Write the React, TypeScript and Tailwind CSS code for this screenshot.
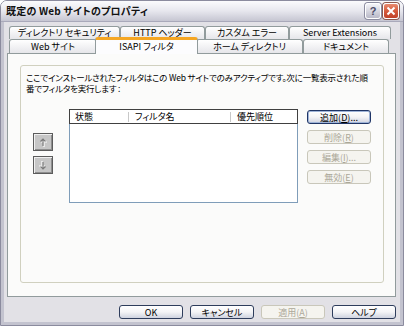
import React from "react";

const jp = "font-['Noto_Sans_CJK_JP','Noto_Sans',sans-serif] [font-feature-settings:'palt']";

const backTabs = [
    { label: "ディレクトリ セキュリティ", w: "w-[111px]" },
    { label: "HTTP ヘッダー", w: "w-[85px]" },
    { label: "カスタム エラー", w: "w-[84px]" },
    { label: "Server Extensions", w: "w-[102px]" },
];

function Tab({ label, w, selected }: { label: string; w: string; selected?: boolean }) {
    if (selected) {
        return (
            <div
                className={`${w} relative z-10 -mx-[2px] -mt-[2px] -mb-[1px] h-[17px] flex items-center justify-center rounded-t-[3px] border-x border-[#919b9c] border-t-[3px] border-t-[#f5a623] bg-[#fcfcfe] text-black`}
            >
                {label}
            </div>
        );
    }
    return (
        <div
            className={`${w} h-full flex items-center justify-center rounded-t-[3px] border-x border-t border-[#919b9c] bg-gradient-to-b from-white to-[#e6e6ea] text-black`}
        >
            {label}
        </div>
    );
}

function Btn({ children, disabled, primary }: { children: React.ReactNode; disabled?: boolean; primary?: boolean }) {
    return (
        <div
            className={
                "w-[64px] h-[14px] flex items-center justify-center rounded-[3px] border leading-none " +
                (disabled
                    ? "border-[#c9c7ba] bg-[#f5f4ef] text-[#aca899]"
                    : primary
                    ? "border-[#1f3566] bg-gradient-to-b from-white via-[#f4f4f6] to-[#cfd3e0] text-black shadow-[inset_0_0_0_1px_#9fb4d8]"
                    : "border-[#2e3d5c] bg-gradient-to-b from-white via-[#f4f4f6] to-[#cfd3e0] text-black")
            }
        >
            {children}
        </div>
    );
}

function ArrowBtn({ down }: { down?: boolean }) {
    return (
        <div className="w-[20px] h-[18px] flex items-center justify-center border border-[#5c5c5c] bg-[#c6c6c6] shadow-[inset_1px_1px_0_#f0f0f0,inset_-1px_-1px_0_#8e8e8e]">
            <svg width="8" height="11" viewBox="0 0 8 11">
                <g transform={down ? "rotate(180 4 5.5)" : undefined}>
                    <path d="M5 3 L5 10 M2.5 5.5 L5 3 L7.5 5.5" stroke="#ffffff" strokeWidth="1.2" fill="none" />
                    <path d="M4 2 L4 9 M1.5 4.5 L4 2 L6.5 4.5" stroke="#7c7c7c" strokeWidth="1.2" fill="none" />
                </g>
            </svg>
        </div>
    );
}

export default function App() {
    return (
        <div className={`w-[404px] h-[326px] bg-white text-[9px] leading-[10px] ${jp}`}>
            <div className="w-full h-full flex flex-col rounded-t-[7px] border border-[#8b8b9e] overflow-hidden">
                {/* Title bar */}
                <div className="h-[21px] shrink-0 flex items-center justify-between pl-[5px] pr-[4px] bg-gradient-to-b from-[#fbfbfd] via-[#e7e7ee] to-[#c6c6d2] border-b border-[#a9a9ba]">
                    <span className="text-[10px] font-bold text-[#111] tracking-[0.2px]">既定の Web サイトのプロパティ</span>
                    <div className="flex items-center gap-[2px]">
                        <div className="w-[16px] h-[16px] rounded-[3px] border border-white bg-gradient-to-b from-[#f4f4f8] to-[#b9b9c8] shadow-[0_0_0_1px_#8c8ca0] flex items-center justify-center text-[11px] font-bold text-[#4b4b68] font-['Liberation_Sans',sans-serif]">
                            ?
                        </div>
                        <div className="w-[16px] h-[16px] rounded-[3px] border border-white bg-gradient-to-b from-[#e88b70] via-[#d65b3c] to-[#c0422a] shadow-[0_0_0_1px_#8c5a50] flex items-center justify-center">
                            <svg width="10" height="10" viewBox="0 0 10 10">
                                <path d="M1.5 1.5 L8.5 8.5 M8.5 1.5 L1.5 8.5" stroke="#ffffff" strokeWidth="2" />
                            </svg>
                        </div>
                    </div>
                </div>

                {/* Body */}
                <div className="flex-1 flex flex-col bg-[#e2e1e6] border-x-[3px] border-b-[3px] border-[#c3c3cf] pl-[3px] pr-[4px] pt-[4px] pb-[3px]">
                    {/* Tabs */}
                    <div className="flex h-[13px] ml-[2px]">
                        {backTabs.map((t) => (
                            <Tab key={t.label} label={t.label} w={t.w} />
                        ))}
                    </div>
                    <div className="flex h-[14px] ml-[2px]">
                        <Tab label="Web サイト" w="w-[88px]" />
                        <Tab label="ISAPI フィルタ" w="w-[103px]" selected />
                        <Tab label="ホーム ディレクトリ" w="w-[107px]" />
                        <Tab label="ドキュメント" w="w-[86px]" />
                    </div>

                    {/* Panel */}
                    <div className="h-[244px] border border-[#919b9c] bg-[#fbfbfa] pl-[12px] pr-[11px] pt-[11px]">
                        <div className="h-[218px] rounded-[3px] border border-[#d0d0bf] pt-[6px]">
                            <p className="pl-[5px] text-black text-[8.5px] leading-[11px] tracking-[-0.2px] whitespace-nowrap">
                                ここでインストールされたフィルタはこの Web サイトでのみアクティブです。次に一覧表示された順
                                <br />
                                番でフィルタを実行します :
                            </p>
                            <div className="flex items-start mt-[15px]">
                                <div className="ml-[12px] mt-[24px] flex flex-col gap-[5px]">
                                    <ArrowBtn />
                                    <ArrowBtn down />
                                </div>
                                <div className="ml-[16px] w-[229px] h-[94px] flex flex-col">
                                    <div className="h-[15px] flex items-center border border-[#404040] bg-white text-black">
                                        <div className="w-[58px] pl-[5px]">状態</div>
                                        <div className="w-px h-[10px] bg-[#c8c8c8]" />
                                        <div className="w-[101px] pl-[6px]">フィルタ名</div>
                                        <div className="w-px h-[10px] bg-[#c8c8c8]" />
                                        <div className="flex-1 pl-[6px]">優先順位</div>
                                    </div>
                                    <div className="flex-1 border-x border-b border-[#7f9db9] bg-white" />
                                </div>
                                <div className="ml-[9px] mt-[1px] flex flex-col gap-[6px]">
                                    <Btn primary>
                                        追加(<u>D</u>)...
                                    </Btn>
                                    <Btn disabled>
                                        削除(<u>R</u>)
                                    </Btn>
                                    <Btn disabled>
                                        編集(<u>I</u>)...
                                    </Btn>
                                    <Btn disabled>
                                        無効(<u>E</u>)
                                    </Btn>
                                </div>
                            </div>
                        </div>
                    </div>

                    {/* Dialog buttons */}
                    <div className="mt-[8px] flex justify-end gap-[7px]">
                        <Btn>OK</Btn>
                        <Btn>キャンセル</Btn>
                        <Btn disabled>
                            適用(<u>A</u>)
                        </Btn>
                        <Btn>ヘルプ</Btn>
                    </div>
                </div>
            </div>
        </div>
    );
}
